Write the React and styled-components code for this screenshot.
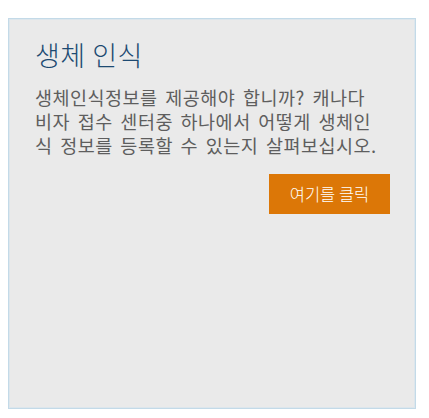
import React from "react";
import styled, { createGlobalStyle } from "styled-components";

const Global = createGlobalStyle`
  html, body { margin: 0; padding: 0; background: #ffffff; }
  body { font-family: "Noto Sans CJK KR", "Noto Sans", sans-serif; }
`;

const Page = styled.div`
  padding: 18px 13px 9px 8px;
`;

const Card = styled.section`
  box-sizing: border-box;
  width: 408px;
  height: 391px;
  background: #eaeaea;
  border: 1px solid #c3dae8;
  box-shadow: inset 0 0 0 1px #dde6ec;
  padding: 18px 25px 0 26px;
  display: flex;
  flex-direction: column;
`;

const Title = styled.h2`
  margin: 0;
  font-family: "Noto Sans CJK KR", sans-serif;
  font-weight: 300;
  font-size: 27px;
  line-height: 36px;
  letter-spacing: 0.5px;
  color: #1d4a72;
`;

const Body = styled.p`
  margin: 12px 0 0 0;
  font-family: "Noto Sans CJK KR", sans-serif;
  font-size: 18.5px;
  line-height: 24px;
  color: #5e5e5e;
  letter-spacing: 0.5px;
  word-spacing: 3px;
  white-space: nowrap;
`;

const Actions = styled.div`
  display: flex;
  justify-content: flex-end;
  margin-top: 17px;
`;

const Button = styled.a`
  display: flex;
  align-items: center;
  justify-content: center;
  width: 121px;
  height: 40px;
  background: #dc7707;
  color: #ffffff;
  font-family: "Noto Sans CJK KR", sans-serif;
  font-weight: 300;
  font-size: 16.5px;
  text-decoration: none;
  cursor: pointer;
`;

export default function App() {
  return (
    <>
      <Global />
      <Page>
        <Card>
          <Title>생체 인식</Title>
          <Body>
            생체인식정보를 제공해야 합니까? 캐나다
            <br />
            비자 접수 센터중 하나에서 어떻게 생체인
            <br />
            식 정보를 등록할 수 있는지 살펴보십시오.
          </Body>
          <Actions>
            <Button href="#">여기를 클릭</Button>
          </Actions>
        </Card>
      </Page>
    </>
  );
}
